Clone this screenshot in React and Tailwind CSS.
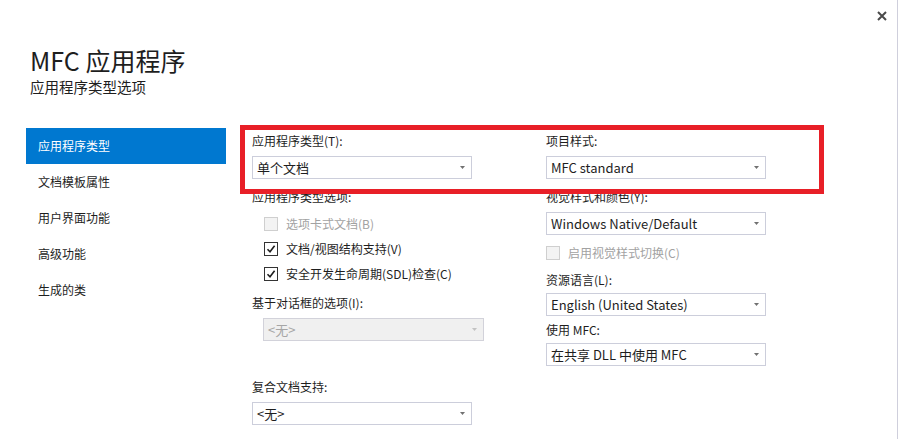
import React from "react";

function Arrow({ disabled }) {
  return (
    <svg width="5" height="3" viewBox="0 0 5 3" className="shrink-0">
      <path d="M0 0H5L2.5 3Z" fill={disabled ? "#c2c2c2" : "#717171"} />
    </svg>
  );
}

function Select({ value, disabled, className = "" }) {
  const tone = disabled
    ? "bg-[#f0f0f0] border-[#d2d2da] text-[#a6a6a6]"
    : "bg-white border-[#cccedb] text-[#1e1e1e]";
  return (
    <div
      className={`flex items-center justify-between h-[23px] border pl-[4px] pr-[6px] text-[13px] leading-[21px] ${tone} ${className}`}
    >
      <span>{value}</span>
      <Arrow disabled={disabled} />
    </div>
  );
}

function Check({ checked, disabled, label }) {
  const box = disabled
    ? "border-[#cfcfcf] bg-[#f3f3f3]"
    : "border-[#333333] bg-white";
  return (
    <div className="flex items-center h-[25px]">
      <div className={`w-[14px] h-[14px] border flex items-center justify-center ${box}`}>
        {checked && (
          <svg width="10" height="10" viewBox="0 0 10 10">
            <path d="M1.5 5.2L4 7.7L8.6 1.8" fill="none" stroke="#1e1e1e" strokeWidth="1.6" />
          </svg>
        )}
      </div>
      <span className={`ml-[8px] text-[12px] leading-[18px] ${disabled ? "text-[#a2a2a2]" : "text-[#1e1e1e]"}`}>
        {label}
      </span>
    </div>
  );
}

function Label({ children, className = "" }) {
  return <div className={`h-[18px] text-[12px] leading-[18px] text-[#1e1e1e] ${className}`}>{children}</div>;
}

const navItems = ["应用程序类型", "文档模板属性", "用户界面功能", "高级功能", "生成的类"];

export default function App() {
  return (
    <div className="w-[899px] h-[439px] bg-white overflow-hidden font-['Noto_Sans_CJK_SC','Noto_Sans',sans-serif]">
      <div className="relative w-[898px] h-[439px] border-r border-[#cfcfdc]">
        {/* close */}
        <button className="absolute left-[876px] top-[10px] w-[11px] h-[11px] flex items-center justify-center">
          <svg width="10" height="10" viewBox="0 0 10 10">
            <path d="M1 1L9 9M9 1L1 9" stroke="#4a4a4a" strokeWidth="2" />
          </svg>
        </button>

        {/* header */}
        <div className="pl-[30px] pt-[45px]">
          <div className="text-[25px] leading-[31px] text-[#1e1e1e]">MFC 应用程序</div>
          <div className="mt-[2px] text-[14.5px] leading-[18px] text-[#1e1e1e]">应用程序类型选项</div>
        </div>

        {/* body */}
        <div className="flex mt-[32px]">
          <div className="pl-[26px] w-[226px] shrink-0">
            {navItems.map((t, i) => (
              <div
                key={t}
                className={
                  i === 0
                    ? "h-[36px] pl-[12px] flex items-center text-[12px] bg-[#0078d0] text-white"
                    : "h-[36px] pl-[12px] flex items-center text-[12px] text-[#1e1e1e]"
                }
              >
                {t}
              </div>
            ))}
          </div>

          <div className="ml-[26px] pt-[4px] flex">
            {/* column 1 */}
            <div className="w-[294px] flex flex-col">
              <Label>应用程序类型(T):</Label>
              <Select value="单个文档" className="mt-[6px] w-[220px]" />
              <Label className="mt-[9px]">应用程序类型选项:</Label>
              <div className="mt-[5px] pl-[12px] flex flex-col">
                <Check disabled label="选项卡式文档(B)" />
                <Check checked label="文档/视图结构支持(V)" />
                <Check checked label="安全开发生命周期(SDL)检查(C)" />
              </div>
              <Label className="mt-[8px]">基于对话框的选项(I):</Label>
              <Select disabled value="<无>" className="mt-[6px] ml-[11px] w-[221px]" />
              <Label className="mt-[37px]">复合文档支持:</Label>
              <Select value="<无>" className="mt-[6px] w-[220px]" />
            </div>

            {/* column 2 */}
            <div className="w-[220px] flex flex-col">
              <Label>项目样式:</Label>
              <Select value="MFC standard" className="mt-[6px] w-[220px]" />
              <Label className="mt-[9px]">视觉样式和颜色(Y):</Label>
              <Select value="Windows Native/Default" className="mt-[6px] w-[220px]" />
              <div className="mt-[5px]">
                <Check disabled label="启用视觉样式切换(C)" />
              </div>
              <Label className="mt-[6px]">资源语言(L):</Label>
              <Select value="English (United States)" className="mt-[4px] w-[220px]" />
              <Label className="mt-[5px]">使用 MFC:</Label>
              <Select value="在共享 DLL 中使用 MFC" className="mt-[4px] w-[220px]" />
            </div>
          </div>
        </div>

        {/* red annotation box */}
        <div className="absolute left-[240px] top-[125px] w-[584px] h-[69px] border-[5px] border-[#e81f27] pointer-events-none" />
      </div>
    </div>
  );
}
